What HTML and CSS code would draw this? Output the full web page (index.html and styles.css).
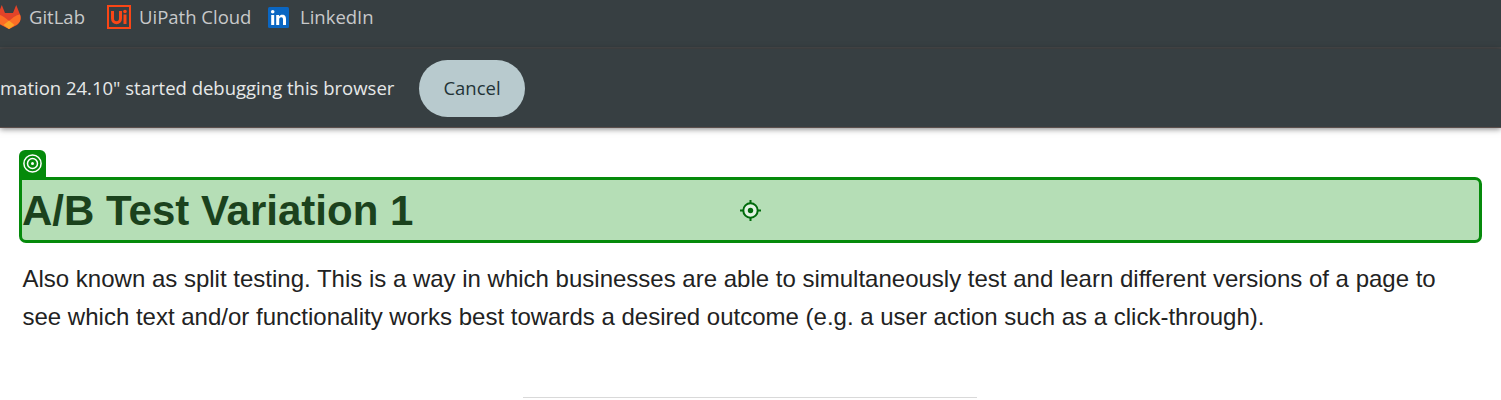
FILE: index.html
```html
<!DOCTYPE html>
<html lang="en">
<head>
<meta charset="utf-8">
<title>A/B Test</title>
<link rel="stylesheet" href="styles.css">
</head>
<body>
<nav class="bookmarks">
  <a class="bookmark gitlab">
    <svg class="gitlab-icon" width="24" height="24" viewBox="0 0 24 24">
      <path fill="#e24329" d="M4.8 0 1 9.5C-.8 14 1 17.800 4 20L12 24l8-4c3-2.200 4.800-6 3-10.500L19.200 0 16 8H8z"/>
      <path fill="#fc6d26" d="M1 9.500C-.5 14 1 17.500 4 19.500L12 24l8-4.500c3-2 4.500-5.500 3-10-3 .3-6 2-11 6.500-5-4.500-8-6.200-11-6.500z"/>
      <path fill="#fca326" d="M12 15.500 6.500 20l5.500 4 5.500-4z"/>
    </svg>
    <span class="label l-gitlab">GitLab</span>
  </a>
  <a class="bookmark uipath">
    <svg width="24" height="24" viewBox="0 0 24 24">
      <path fill="none" stroke="#fa4616" stroke-width="2" d="M1 1h22v22H1z"/>
      <path fill="none" stroke="#fa4616" stroke-width="3" d="M5.500 6v7.500c0 5.500 8 5.500 8 0V6M18 9.500V19"/>
      <circle cx="18" cy="6.500" r="1.800" fill="#fa4616"/>
    </svg>
    <span class="label l-uipath">UiPath Cloud</span>
  </a>
  <a class="bookmark linkedin">
    <svg width="21" height="21" viewBox="0 0 21 21">
      <rect width="21" height="21" rx="1.500" fill="#0a66c2"/>
      <path fill="#fff" d="M3.200 8h3v10h-3zM8.200 8H11v1.400c.7-1.100 1.800-1.700 3.300-1.700 2.900 0 3.700 1.900 3.700 4.500V18h-3v-5.100c0-1.400-.1-2.700-1.800-2.700-1.600 0-2 1.200-2 2.600V18h-3z"/>
      <circle cx="4.700" cy="4.800" r="1.800" fill="#fff"/>
    </svg>
    <span class="label l-linkedin">LinkedIn</span>
  </a>
</nav>
<div class="infobar">
  <span class="message">mation 24.10" started debugging this browser</span>
  <button class="cancel">Cancel</button>
</div>
<main class="page">
  <div class="tab">
    <svg width="19" height="19" viewBox="0 0 19 19" fill="none" stroke="#fff" stroke-width="1.500">
      <circle cx="9.500" cy="9.500" r="8.600"/>
      <circle cx="9.500" cy="9.500" r="5"/>
      <circle cx="9.500" cy="9.500" r="1.500" fill="#fff" stroke="none"/>
    </svg>
  </div>
  <div class="selection">
    <h1 class="title">A/B Test Variation 1</h1>
    <svg class="crosshair" width="21" height="21" viewBox="0 0 21 21">
      <circle cx="10.500" cy="10.500" r="7.200" fill="#e1f2e2" stroke="#006b0b" stroke-width="2"/>
      <circle cx="10.500" cy="10.500" r="2.700" fill="#006b0b"/>
      <path stroke="#006b0b" stroke-width="2" d="M10.500 0v3M10.500 18v3M0 10.500h3M18 10.500h3"/>
    </svg>
  </div>
  <p class="description">
    <span class="line line-1">Also known as split testing. This is a way in which businesses are able to simultaneously test and learn different versions of a page to</span>
    <span class="line line-2">see which text and/or functionality works best towards a desired outcome (e.g. a user action such as a click-through).</span>
  </p>
  <hr class="rule">
</main>
</body>
</html>
```
FILE: styles.css
```css
* { box-sizing: border-box; }
body {
  margin: 0;
  height: 400px;
  overflow: hidden;
  background: #fff;
  font-family: "Liberation Sans", Arial, sans-serif;
}
.bookmarks {
  display: flex;
  height: 49px;
  background: #373f42;
  border-bottom: 2px solid #48494a;
}
.bookmark {
  display: flex;
  align-items: center;
  height: 34px;
  color: #c8c9ca;
  font: 18.500px/34px "Open Sans", "Noto Sans", sans-serif;
}
.bookmark svg { flex: none; }
.gitlab { width: 107px; }
.gitlab-icon { margin: 0 8px 0 -3px; }
.uipath { width: 161px; }
.uipath svg { margin-right: 8px; }
.linkedin svg { margin-right: 11px; }
.label { white-space: nowrap; }
.infobar {
  display: flex;
  align-items: center;
  height: 79px;
  background: #373f42;
  border-bottom: 1px solid #5b4f4c;
  box-shadow: 0 1px 6px rgba(0, 0, 0, 0.5);
}
.message {
  width: 419px;
  color: #e6e8e8;
  font: 18.500px/30px "Open Sans", "Noto Sans", sans-serif;
  white-space: nowrap;
}
.cancel {
  width: 106px;
  height: 57px;
  padding: 0;
  border: 0;
  border-radius: 29px;
  background: #b8cace;
  color: #233337;
  font: 500 18.500px/30px "Open Sans", "Noto Sans", sans-serif;
}
.page { padding: 22px 19px 0; }
.tab {
  display: flex;
  justify-content: center;
  width: 27px;
  height: 27px;
  padding-top: 4px;
  border-radius: 6px 6px 0 0;
  background: #058a0b;
}
.selection {
  position: relative;
  width: 1463px;
  height: 66px;
  border: 3px solid #058a0b;
  border-radius: 0 7px 7px 7px;
  background: #b5deb6;
}
.title {
  margin: 0;
  color: #1b421d;
  font-size: 42px;
  line-height: 61px;
  white-space: nowrap;
}
.crosshair {
  position: absolute;
  left: 718px;
  top: 20px;
}
.description {
  margin: 17px 0 0 3.500px;
  color: #222;
  font-size: 24px;
  line-height: 38px;
}
.line {
  display: block;
  width: max-content;
  white-space: nowrap;
}
.rule {
  width: 454px;
  height: 1px;
  margin: 61px 0 0 504px;
  border: 0;
  background: #d9d9d9;
}
```
